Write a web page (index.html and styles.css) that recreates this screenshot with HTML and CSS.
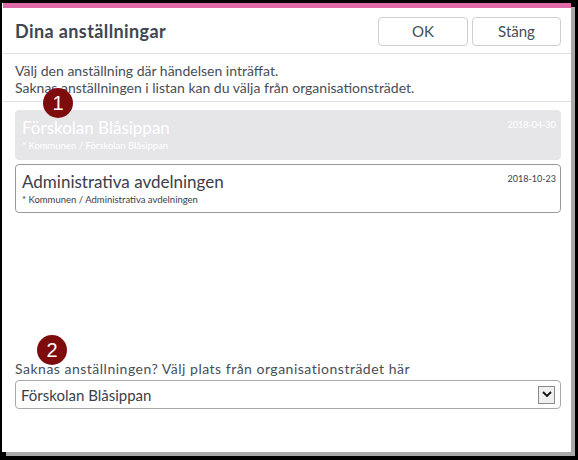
FILE: index.html
```html
<!DOCTYPE html>
<html lang="sv">
<head>
<meta charset="utf-8">
<title>Dina anställningar</title>
<link rel="stylesheet" href="styles.css">
</head>
<body>
<div class="dialog">
  <div class="accent"></div>
  <header class="head">
    <h1 class="title">Dina anställningar</h1>
    <div class="actions">
      <button class="btn btn-ok">OK</button>
      <button class="btn btn-close">Stäng</button>
    </div>
  </header>
  <div class="intro">
    <p>Välj den anställning där händelsen inträffat.</p>
    <p>Saknas anställningen i listan kan du välja från organisationsträdet.</p>
  </div>
  <div class="list">
    <div class="card card-disabled">
      <div class="card-main">
        <div class="card-name">Förskolan Blåsippan</div>
        <div class="card-path">* Kommunen / Förskolan Blåsippan</div>
      </div>
      <div class="card-date">2018-04-30</div>
    </div>
    <div class="card">
      <div class="card-main">
        <div class="card-name">Administrativa avdelningen</div>
        <div class="card-path">* Kommunen / Administrativa avdelningen</div>
      </div>
      <div class="card-date">2018-10-23</div>
    </div>
  </div>
  <div class="picker">
    <label class="picker-label">Saknas anställningen? Välj plats från organisationsträdet här</label>
    <div class="select">
      <span class="select-value">Förskolan Blåsippan</span>
      <span class="select-arrow">
        <svg width="10" height="7" viewBox="0 0 10 7"><path d="M1 1 L5 5 L9 1" fill="none" stroke="#111" stroke-width="1.8"/></svg>
      </span>
    </div>
  </div>
  <span class="step step-1">1</span>
  <span class="step step-2">2</span>
</div>
</body>
</html>
```

FILE: styles.css
```css
html, body {
  margin: 0;
  padding: 0;
  background: #000;
}

body {
  width: 578px;
  height: 460px;
  padding: 3px 0 0 2px;
  box-sizing: border-box;
  font-family: Lato, "Noto Sans", sans-serif;
  color: #474e58;
}

.dialog {
  position: relative;
  width: 569px;
  height: 449px;
  background: #fff;
  box-shadow: 4px 4px 0 #a9a9a9;
  display: flex;
  flex-direction: column;
}

.accent {
  height: 5px;
  margin-left: 1px;
  background: #df6aa5;
}

.head {
  height: 45px;
  display: flex;
  align-items: center;
  justify-content: space-between;
  padding: 0 10px 0 13px;
  border-bottom: 1px solid #e2e2e2;
}

.title {
  margin: 0;
  font-size: 18px;
  font-weight: 700;
  color: #3e4651;
  letter-spacing: 0.4px;
}

.actions {
  display: flex;
  gap: 4px;
  margin-top: 1px;
}

.btn {
  height: 29px;
  border: 1px solid #cfcfcf;
  border-radius: 4px;
  background: #fff;
  font-family: inherit;
  font-size: 15px;
  color: #454d57;
  padding: 0;
}

.btn-ok { width: 90px; }
.btn-close { width: 89px; }

.intro {
  padding: 8px 13px 5px;
  border-bottom: 1px solid #e2e2e2;
  font-size: 14px;
  line-height: 17px;
}

.intro p { margin: 0; }

.list {
  padding: 8px 10px 0 13px;
  display: flex;
  flex-direction: column;
  gap: 4px;
  flex: 1;
}

.card {
  height: 49px;
  box-sizing: border-box;
  border: 1px solid #9a9a9e;
  border-radius: 4px;
  padding: 6px 4px 0 6px;
  display: flex;
  justify-content: space-between;
  color: #3b4049;
}

.card-disabled {
  height: 50px;
  border-color: #e6e6e8;
  background: #e6e6e8;
  color: #fff;
}

.card-name {
  font-size: 17px;
  line-height: 22px;
}

.card-path {
  font-size: 9.5px;
  line-height: 12px;
  margin-top: 1px;
}

.card-date {
  font-size: 9px;
  line-height: 12px;
  margin-top: 2px;
}

.picker {
  padding: 0 10px 43px 13px;
}

.picker-label {
  display: block;
  font-size: 14px;
  letter-spacing: 0.5px;
  line-height: 16px;
  margin-bottom: 3px;
}

.select {
  height: 29px;
  box-sizing: border-box;
  border: 1px solid #a9a9ad;
  border-radius: 4px;
  display: flex;
  align-items: center;
  justify-content: space-between;
  padding: 0 5px 0 5px;
}

.select-value {
  font-size: 15px;
  color: #3b4049;
}

.select-arrow {
  width: 17px;
  height: 18px;
  box-sizing: border-box;
  border: 1px solid #8a8a8a;
  background: #f0f0f0;
  display: flex;
  align-items: center;
  justify-content: center;
}

.step {
  position: absolute;
  width: 30px;
  height: 30px;
  border-radius: 50%;
  background: #7e0c0c;
  color: #fff;
  font-family: "Liberation Sans", Arial, sans-serif;
  font-size: 20px;
  line-height: 30px;
  text-align: center;
}

.step-1 { left: 41px; top: 85px; }
.step-2 { left: 35px; top: 332px; }
```
